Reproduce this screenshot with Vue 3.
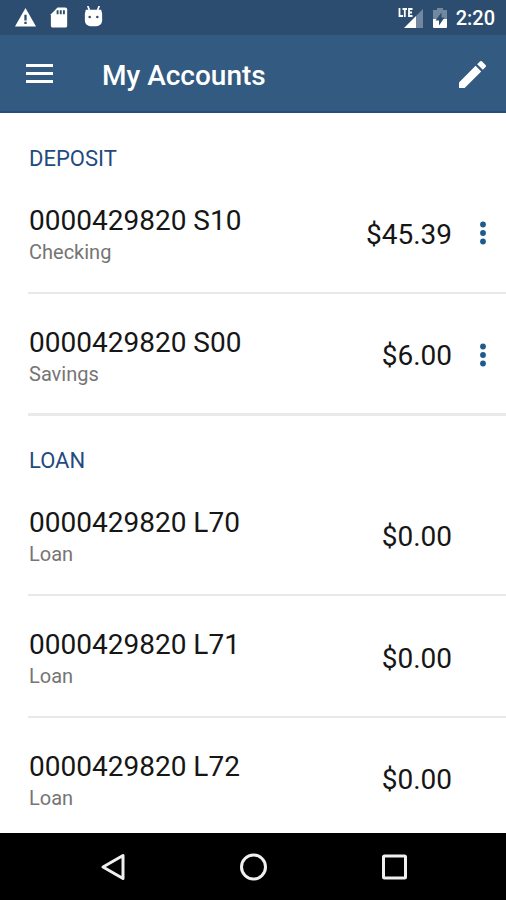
<template>
  <div class="screen">
    <div class="status-bar">
      <div class="status-group notifications">
        <svg class="status-icon" viewBox="0 0 24 24">
          <path fill="#fff" d="M12 2 L23 21.500 H1 Z" />
          <path fill="#2c4d70" d="M10.800 9 h2.400 v6 h-2.400z M10.800 16.500 h2.400 v2.400 h-2.400z" />
        </svg>
        <svg class="status-icon" viewBox="0 0 24 24">
          <path fill="#fff" d="M10 1.500 H18 a2 2 0 0 1 2 2 V20.500 a2 2 0 0 1-2 2 H5 a2 2 0 0 1-2-2 V8.500 Z" />
          <path fill="#2c4d70" d="M9 4.500h2v4h-2z M12.300 4.500h2v4h-2z M15.600 4.500h2v4h-2z" />
        </svg>
        <svg class="status-icon" viewBox="0 0 24 24">
          <path stroke="#fff" stroke-width="1.800" d="M6 0 L8 5 M18 0 L16 5" />
          <path fill="#fff" d="M4 4 H20 L21 8 V15 a6 6 0 0 1-6 6 H9 a6 6 0 0 1-6-6 V8 Z" />
          <circle cx="8" cy="11.500" r="1.300" fill="#2c4d70" />
          <circle cx="16" cy="11.500" r="1.300" fill="#2c4d70" />
        </svg>
      </div>
      <div class="status-group">
        <svg class="signal-icon" viewBox="0 0 26 22">
          <path fill="#7288a1" d="M25 2 V21 H18 V9 Z" />
          <path fill="#fff" d="M18 9 V21 H6 Z" />
          <path
            fill="none"
            stroke="#fff"
            stroke-width="1.800"
            d="M1.500 1 V9 H5 M4.500 2 H9 M6.800 2 V10 M14.500 2 H11 V9 H14.500 M11 5.500 H14"
          />
        </svg>
        <svg class="battery-icon" viewBox="0 0 16 22">
          <path fill="#7288a1" d="M5 1 H11 V3 H15 V12 H1 V3 H5 Z" />
          <path fill="#fff" d="M1 12 H15 V20 a1 1 0 0 1-1 1 H2 a1 1 0 0 1-1-1 Z" />
          <path fill="#2c4d70" d="M9.500 5.500 L3.500 13.500 H7 V18.500 L12.500 10.500 H9.500 Z" />
        </svg>
        <span class="clock">2:20</span>
      </div>
    </div>

    <header class="app-bar">
      <button class="icon-button" aria-label="Menu">
        <svg class="menu-icon" viewBox="0 0 28 22">
          <path fill="#fff" d="M0 1h27v3H0z M0 9h27v3H0z M0 17h27v3H0z" />
        </svg>
      </button>
      <h1 class="title">My Accounts</h1>
      <button class="icon-button" aria-label="Edit">
        <svg class="edit-icon" viewBox="3 3 18 18">
          <path
            fill="#fff"
            d="M3 17.250V21h3.750L17.810 9.940l-3.750-3.750L3 17.250z M20.710 7.040c.39-.39.39-1.020 0-1.410l-2.340-2.340c-.39-.39-1.020-.39-1.410 0l-1.830 1.830 3.750 3.750 1.830-1.830z"
          />
        </svg>
      </button>
    </header>

    <main class="content">
      <section v-for="section in sections" :key="section.name" class="section">
        <h2 class="section-title">{{ section.name }}</h2>
        <ul class="accounts">
          <li v-for="account in section.accounts" :key="account.number" class="account">
            <div class="info">
              <div class="number">{{ account.number }}</div>
              <div class="type">{{ account.type }}</div>
            </div>
            <div class="amount">{{ account.amount }}</div>
            <div class="actions">
              <button v-if="account.hasMenu" class="icon-button" aria-label="More options">
                <svg class="more-icon" viewBox="0 0 6 24">
                  <circle cx="3" cy="3.500" r="2.900" />
                  <circle cx="3" cy="12" r="2.900" />
                  <circle cx="3" cy="20.500" r="2.900" />
                </svg>
              </button>
            </div>
          </li>
        </ul>
      </section>
    </main>

    <nav class="nav-bar">
      <button class="icon-button" aria-label="Back">
        <svg class="nav-icon" viewBox="0 0 28 28">
          <path d="M25 2.500 V25.500 L5 14 Z" />
        </svg>
      </button>
      <button class="icon-button" aria-label="Home">
        <svg class="nav-icon" viewBox="0 0 28 28">
          <circle cx="14.500" cy="14" r="12" />
        </svg>
      </button>
      <button class="icon-button" aria-label="Recent apps">
        <svg class="nav-icon" viewBox="0 0 28 28">
          <rect x="3.500" y="3" width="22" height="22" rx="1" />
        </svg>
      </button>
    </nav>
  </div>
</template>

<script setup>
import { ref } from "vue";

const sections = ref([
  {
    name: "DEPOSIT",
    accounts: [
      { number: "0000429820 S10", type: "Checking", amount: "$45.39", hasMenu: true },
      { number: "0000429820 S00", type: "Savings", amount: "$6.00", hasMenu: true },
    ],
  },
  {
    name: "LOAN",
    accounts: [
      { number: "0000429820 L70", type: "Loan", amount: "$0.00" },
      { number: "0000429820 L71", type: "Loan", amount: "$0.00" },
      { number: "0000429820 L72", type: "Loan", amount: "$0.00" },
    ],
  },
]);
</script>

<style>
body {
  margin: 0;
  background-color: #fff;
}
</style>

<style scoped>
.screen {
  display: flex;
  flex-direction: column;
  height: 100vh;
  font-family: Roboto, "Liberation Sans", sans-serif;
  color: #161616;
}

svg {
  display: block;
}

.icon-button {
  display: flex;
  align-items: center;
  justify-content: center;
  padding: 0;
  border: 0;
  background: none;
  cursor: pointer;
}

.status-bar {
  display: flex;
  flex-shrink: 0;
  align-items: center;
  justify-content: space-between;
  height: 35px;
  padding: 0 11px 0 14px;
  background-color: #2c4d70;
}

.status-group {
  display: flex;
  align-items: center;
  gap: 8px;
}

.notifications {
  gap: 11px;
}

.status-icon {
  width: 23px;
  height: 23px;
}

.signal-icon {
  width: 26px;
  height: 22px;
}

.battery-icon {
  width: 16px;
  height: 22px;
}

.clock {
  font-size: 20px;
  font-weight: 500;
  line-height: 24px;
  color: #fff;
}

.app-bar {
  display: flex;
  flex-shrink: 0;
  align-items: center;
  box-sizing: border-box;
  height: 78px;
  padding: 2px 20px 0 26px;
  border-bottom: 2px solid #234d7c;
  background-color: #335a80;
}

.menu-icon {
  width: 28px;
  height: 22px;
}

.edit-icon {
  width: 27px;
  height: 27px;
}

.title {
  flex: 1;
  margin: 0;
  padding: 4px 0 0 48px;
  font-size: 28px;
  font-weight: 500;
  line-height: 32px;
  color: #fff;
}

.content {
  flex: 1;
  min-height: 0;
  padding-top: 1px;
  overflow-y: auto;
  scrollbar-width: none;
}

.section-title {
  margin: 0;
  padding: 33px 29px 1px;
  font-size: 22px;
  font-weight: 400;
  line-height: 24px;
  color: #1f4b80;
}

.accounts {
  margin: 0;
  padding: 0;
  list-style: none;
}

.account {
  display: flex;
  align-items: center;
  box-sizing: border-box;
  height: 122px;
  margin-left: 28px;
  padding-top: 2px;
  border-bottom: 2px solid #e9e9e9;
}

.account:last-child {
  border-bottom-width: 3px;
}

.info {
  flex: 1;
  padding: 6px 0 0 1px;
}

.number,
.amount {
  font-size: 28px;
  line-height: 32px;
}

.amount {
  padding-top: 3px;
}

.type {
  font-size: 20px;
  line-height: 30px;
  color: #757575;
}

.actions {
  display: flex;
  justify-content: center;
  width: 46px;
  margin-left: 8px;
}

.more-icon {
  width: 6px;
  height: 24px;
  fill: #1f5a8c;
}

.nav-bar {
  display: flex;
  flex-shrink: 0;
  align-items: center;
  justify-content: space-between;
  height: 67px;
  padding: 0 98px;
  background-color: #000;
}

.nav-icon {
  width: 28px;
  height: 28px;
  fill: none;
  stroke: #f0f0f0;
  stroke-width: 3;
  stroke-linejoin: round;
}
</style>
